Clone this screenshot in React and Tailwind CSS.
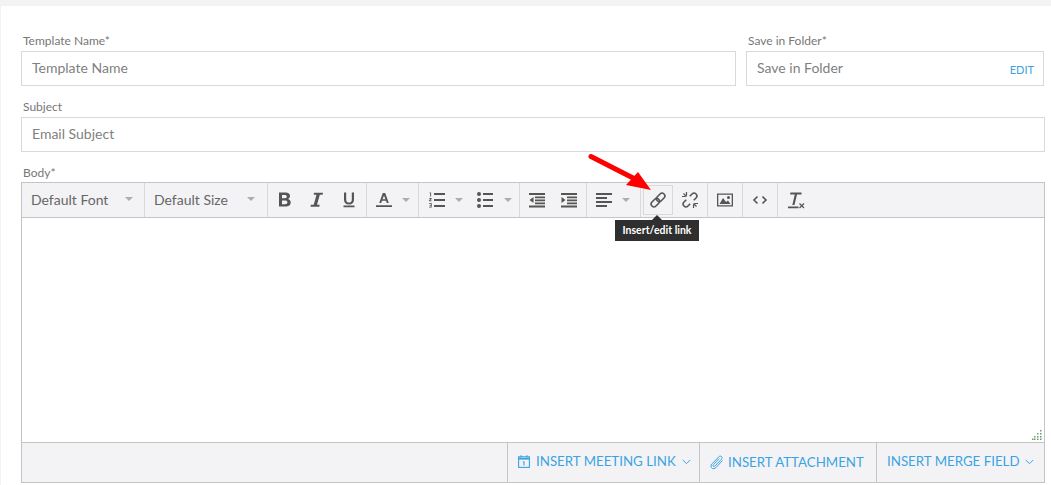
import React from 'react';

const ink = '#555';

const Caret = () => <span className="w-0 h-0 border-x-[4px] border-x-transparent border-t-[4px] border-t-[#adadad]" />;

const Bold = () => (
  <svg width="16" height="16" viewBox="0 0 16 16" fill={ink}>
    <path fillRule="evenodd" d="M2 .5h6.500c3 0 4.500 1.300 4.500 3.500 0 1.400-.7 2.500-2 3v.1c1.700.4 2.700 1.700 2.700 3.400 0 2.600-1.800 4-4.900 4H2zm3 2.400v3.400h2.800c1.300 0 2-.6 2-1.700s-.7-1.700-2-1.700zm0 5.600v3.700h3.100c1.500 0 2.300-.6 2.300-1.900s-.9-1.800-2.400-1.800z" />
  </svg>
);
const Italic = () => (
  <svg width="16" height="16" viewBox="0 0 16 16" fill={ink}>
    <path d="M5 .8h9l-.4 2h-2.800L8 12.700h2.700l-.4 2H1.500l.4-2h2.800L7.500 2.800H4.700z" />
  </svg>
);
const Underline = () => (
  <svg width="16" height="16" viewBox="0 0 16 16" fill={ink}>
    <path d="M3 .5h2.200v7.200c0 1.900 1 2.800 2.800 2.800s2.800-.9 2.800-2.800V.5H13v7.300c0 3.100-1.900 4.700-5 4.700s-5-1.600-5-4.700zM2.500 13.500h11V15.300h-11z" />
  </svg>
);
const FontColor = () => (
  <svg width="16" height="16" viewBox="0 0 16 16" fill={ink}>
    <path fillRule="evenodd" d="M6.800 1h2.400l3.600 10h-2l-.8-2.300H6l-.8 2.300h-2zM8 3.600 6.600 7.200h2.800zM0 13.300h16v1.700H0z" />
  </svg>
);
const NumList = () => (
  <svg width="16" height="16" viewBox="0 0 16 16" fill={ink}>
    <path d="M5 1h11v2H5zM5 7h11v2H5zM5 13h11v2H5z" />
    <path d="M.6.500h1.500v4H1.200V1.300H.6zM0 6h2.700v.8L1.200 8.400h1.500v.8H0v-.8l1.600-1.600H0zM0 11h2.700v4.500H0v-.8h1.800v-1H.6v-.7h1.200v-1.200H0z" />
  </svg>
);
const BulletList = () => (
  <svg width="16" height="16" viewBox="0 0 16 16" fill={ink}>
    <path d="M6 1h10v2H6zM6 7h10v2H6zM6 13h10v2H6z" />
    <circle cx="2" cy="2" r="2" />
    <circle cx="2" cy="8" r="2" />
    <circle cx="2" cy="14" r="2" />
  </svg>
);
const Outdent = () => (
  <svg width="16" height="16" viewBox="0 0 16 16" fill={ink}>
    <path d="M0 1h16v2H0zM6 4.500h10v1.700H6zM6 7.500h10v1.700H6zM6 10.500h10v1.700H6zM0 13.500h16v2H0zM4.500 5v6L.500 8z" />
  </svg>
);
const Indent = () => (
  <svg width="16" height="16" viewBox="0 0 16 16" fill={ink}>
    <path d="M0 1h16v2H0zM6 4.500h10v1.700H6zM6 7.500h10v1.700H6zM6 10.500h10v1.700H6zM0 13.500h16v2H0zM.5 5v6l4-3z" />
  </svg>
);
const AlignLeft = () => (
  <svg width="16" height="16" viewBox="0 0 16 16" fill={ink}>
    <path d="M0 1h16v2H0zM0 5h11v2H0zM0 9h16v2H0zM0 13h11v2H0z" />
  </svg>
);
const LinkIcon = () => (
  <svg width="18" height="18" viewBox="0 0 18 18" fill="none" stroke={ink} strokeWidth="1.600">
    <g transform="rotate(-45 9 9)">
      <rect x="0.500" y="6.200" width="9.500" height="5.600" rx="2.800" />
      <rect x="8" y="6.200" width="9.500" height="5.600" rx="2.800" />
    </g>
  </svg>
);
const UnlinkIcon = () => (
  <svg width="18" height="18" viewBox="0 0 18 18" fill="none" stroke={ink} strokeWidth="1.600">
    <g transform="rotate(-45 9 9)">
      <path d="M6.500 6.200H3.300a2.800 2.800 0 0 0 0 5.600h3.200M11.500 6.200h3.200a2.800 2.800 0 0 1 0 5.600h-3.200" />
    </g>
    <path strokeWidth="1.200" d="M1 5.500h3.500M5.500 1v3.500M2.500 2.500 5.500 5.500M17 12.500h-3.500M12.500 17v-3.500M15.500 15.500l-3-3" />
  </svg>
);
const ImageIcon = () => (
  <svg width="16" height="16" viewBox="0 0 16 16" fill={ink}>
    <path fillRule="evenodd" d="M0 1.500h16v13H0zM1.300 2.800v10.400h13.400V2.800z" />
    <path d="M2.500 12 6 6 9 10l2-1.500 2.500 3.500z" />
    <circle cx="11.500" cy="5.500" r="1.500" />
  </svg>
);
const CodeIcon = () => (
  <svg width="16" height="16" viewBox="0 0 16 16" fill="none" stroke={ink} strokeWidth="1.600">
    <path d="M5.500 4.500 2 8l3.500 3.500M10.500 4.500 14 8l-3.500 3.500" />
  </svg>
);
const ClearIcon = () => (
  <svg width="17" height="17" viewBox="0 0 17 17" fill={ink}>
    <path d="M2.500.5h11v2H9L6.500 13H4.300L6.800 2.500H2zM0 14.500h10.500v1.800H0z" />
    <path stroke={ink} strokeWidth="1.200" d="M11.500 11.500l4.500 4.500M16 11.500 11.500 16" />
  </svg>
);
const CalendarIcon = () => (
  <svg width="12" height="13" viewBox="0 0 12 13" fill="none" stroke="#3aa3e3" strokeWidth="1.100">
    <rect x="0.600" y="1.800" width="10.800" height="10.600" />
    <path strokeWidth="1.800" d="M.6 3.700h10.800" />
    <path d="M3 .2v2.400M9 .2v2.400M6 6.500v4M5 7.300l1-.8" />
  </svg>
);
const ClipIcon = () => (
  <svg width="14" height="15" viewBox="0 0 14 15" fill="none" stroke="#3aa3e3" strokeWidth="1">
    <path d="M12.500 5.500 6 12.500c-1.300 1.400-3 1.600-4.200.6S.7 10.300 2 8.900L8.500 2c1-1 2.200-1.200 3-.5s.7 2-.3 3L5 11c-.6.600-1.300.7-1.700.3s-.3-1.100.3-1.700l5.500-6" />
  </svg>
);
const Chevron = () => (
  <svg width="9" height="6" viewBox="0 0 9 6" fill="none" stroke="#3aa3e3" strokeWidth="1">
    <path d="M.8 1 4.500 4.700 8.200 1" />
  </svg>
);

const Tool = ({ w, className = '', children }) => (
  <div className={`h-full flex items-center shrink-0 ${w} ${className}`}>{children}</div>
);

const Field = ({ label, placeholder, className = '', children }) => (
  <div className={className}>
    <div className="text-[12px] leading-[14px] text-[#777] pl-[2px] mb-[3px]">{label}</div>
    <div className="relative h-[35px] border border-[#d9d9d9] flex items-center pl-[10px] pb-[2px] text-[14px] text-[#7f7f7f]">
      {placeholder}
      {children}
    </div>
  </div>
);

export default function App() {
  return (
    <div className="w-[1051px] h-[485px] overflow-hidden bg-[#f3f3f5] pt-[6px] pl-[1px] font-['Lato','Open_Sans',sans-serif]">
      <div className="h-full bg-white pt-[28px] pl-[20px] pr-[6px] relative">
        <div className="flex gap-[10px]">
          <Field label="Template Name*" placeholder="Template Name" className="w-[715px]" />
          <Field label="Save in Folder*" placeholder="Save in Folder" className="w-[298px]">
            <span className="absolute right-[9px] bottom-[9px] text-[11px] leading-[12px] text-[#3aa3e3]">EDIT</span>
          </Field>
        </div>
        <Field label="Subject" placeholder="Email Subject" className="mt-[14px]" />

        <div className="text-[12px] leading-[14px] text-[#777] pl-[2px] mt-[14px] mb-[2px]">Body*</div>
        <div className="border border-[#c4c4c4] h-[301px] flex flex-col">
          <div className="h-[35px] shrink-0 bg-[#f3f3f5] border-b border-[#c4c4c4] flex items-center divide-x divide-[#d9d9d9] text-[14px] text-[#666]">
            <Tool w="w-[123px]" className="pl-[9px] pb-[2px] gap-[17px]">Default Font <Caret /></Tool>
            <Tool w="w-[123px]" className="pl-[9px] pb-[2px] gap-[19px]">Default Size <Caret /></Tool>
            <Tool w="w-[99px]" className="pl-[9px] gap-[16px]"><Bold /><Italic /><Underline /></Tool>
            <Tool w="w-[52px]" className="pl-[9px] gap-[10px]"><FontColor /><Caret /></Tool>
            <Tool w="w-[101px]" className="pl-[10px]">
              <NumList /><span className="w-[10px]" /><Caret /><span className="w-[14px]" /><BulletList /><span className="w-[11px]" /><Caret />
            </Tool>
            <Tool w="w-[67px]" className="pl-[9px] gap-[16px]"><Outdent /><Indent /></Tool>
            <Tool w="w-[54px]" className="pl-[9px] gap-[10px]"><AlignLeft /><Caret /></Tool>
            <Tool w="w-[67px]" className="pl-[2px] gap-[2px]">
              <span className="w-[30px] h-[30px] border border-[#d9d9d9] flex items-center justify-center"><LinkIcon /></span>
              <span className="w-[30px] h-[30px] flex items-center justify-center"><UnlinkIcon /></span>
            </Tool>
            <Tool w="w-[35px]" className="justify-center"><ImageIcon /></Tool>
            <Tool w="w-[35px]" className="justify-center"><CodeIcon /></Tool>
            <Tool w="w-[36px]" className="justify-center"><ClearIcon /></Tool>
          </div>

          <div className="flex-1 relative">
            <svg className="absolute right-[2px] bottom-[2px]" width="10" height="10" viewBox="0 0 10 10" fill="#6a9a6a">
              <rect x="8" y="0" width="1.500" height="1.500" />
              <rect x="8" y="3" width="1.500" height="1.500" />
              <rect x="5" y="3" width="1.500" height="1.500" />
              <rect x="8" y="6" width="1.500" height="1.500" />
              <rect x="5" y="6" width="1.500" height="1.500" />
              <rect x="2" y="6" width="1.500" height="1.500" />
              <rect x="8" y="8.500" width="1.500" height="1.500" />
              <rect x="5" y="8.500" width="1.500" height="1.500" />
              <rect x="2" y="8.500" width="1.500" height="1.500" />
              <rect x="0" y="8.500" width="1.500" height="1.500" />
            </svg>
          </div>

          <div className="h-[40px] shrink-0 bg-[#f3f3f5] border-t border-[#c4c4c4] flex justify-end text-[13.3px] text-[#3aa3e3]">
            <div className="w-[192px] border-l border-[#c4c4c4] flex items-center pl-[10px] pb-[2px] gap-[6px]">
              <CalendarIcon /><span>INSERT MEETING LINK</span><Chevron />
            </div>
            <div className="w-[177px] border-l border-[#c4c4c4] flex items-center pl-[10px] gap-[4px]">
              <ClipIcon /><span>INSERT ATTACHMENT</span>
            </div>
            <div className="w-[168px] border-l border-[#c4c4c4] flex items-center pl-[10px] pb-[2px] gap-[5px]">
              <span>INSERT MERGE FIELD</span><Chevron />
            </div>
          </div>
        </div>

        {/* tooltip over the link button */}
        <div className="absolute left-[614px] top-[209px] flex flex-col items-center">
          <span className="w-0 h-0 border-x-[5px] border-x-transparent border-b-[5px] border-b-[#2f2f2f]" />
          <span className="w-[84px] h-[21px] bg-[#2f2f2f] text-white text-[10.5px] font-bold flex items-center justify-center">Insert/edit link</span>
        </div>

        {/* red annotation arrow */}
        <svg className="absolute left-[580px] top-[140px]" width="80" height="55" viewBox="0 0 80 55">
          <path d="M10 10.500 54 33" stroke="#f00" strokeWidth="5" strokeLinecap="round" />
          <path d="M70 44 45 39 57 26z" fill="#f00" />
        </svg>
      </div>
    </div>
  );
}
